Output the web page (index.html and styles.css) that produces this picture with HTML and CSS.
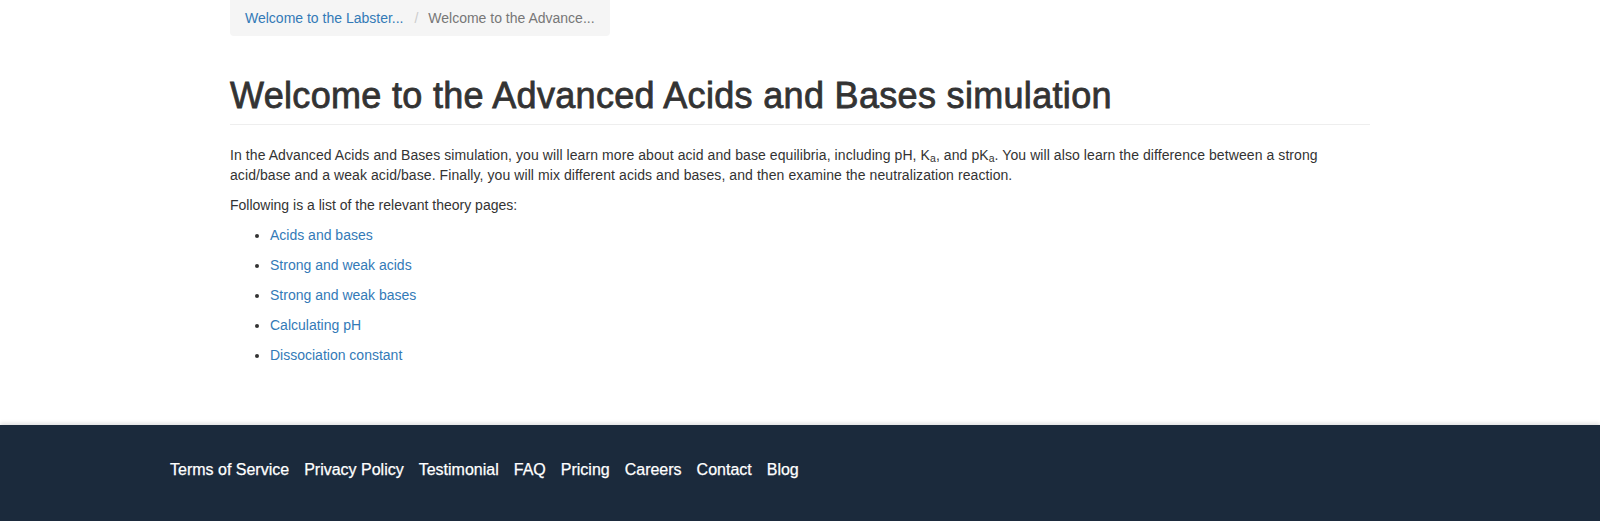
FILE: index.html
```html
<!DOCTYPE html>
<html lang="en">
<head>
<meta charset="utf-8">
<title>Welcome to the Advanced Acids and Bases simulation</title>
<link rel="stylesheet" href="styles.css">
</head>
<body>
<main class="container">
  <ol class="breadcrumb">
    <li><a href="#">Welcome to the Labster...</a></li>
    <li class="active">Welcome to the Advance...</li>
  </ol>
  <div class="page-header">
    <h1>Welcome to the Advanced Acids and Bases simulation</h1>
  </div>
  <p class="intro">In the Advanced Acids and Bases simulation, you will learn more about acid and base equilibria, including pH, K<sub>a</sub>, and pK<sub>a</sub>. You will also learn the difference between a strong acid/base and a weak acid/base. Finally, you will mix different acids and bases, and then examine the neutralization reaction.</p>
  <p>Following is a list of the relevant theory pages:</p>
  <ul class="theory">
    <li><a href="#">Acids and bases</a></li>
    <li><a href="#">Strong and weak acids</a></li>
    <li><a href="#">Strong and weak bases</a></li>
    <li><a href="#">Calculating pH</a></li>
    <li><a href="#">Dissociation constant</a></li>
  </ul>
</main>
<footer class="footer">
  <nav class="footer-inner">
    <a href="#">Terms of Service</a>
    <a href="#">Privacy Policy</a>
    <a href="#">Testimonial</a>
    <a href="#">FAQ</a>
    <a href="#">Pricing</a>
    <a href="#">Careers</a>
    <a href="#">Contact</a>
    <a href="#">Blog</a>
  </nav>
</footer>
</body>
</html>
```
FILE: styles.css
```css
* { box-sizing: border-box; }
html, body { margin: 0; padding: 0; }
body {
  font-family: "Liberation Sans", Arial, Helvetica, sans-serif;
  font-size: 14px;
  line-height: 20px;
  color: #333;
  background: #fff;
}
a { color: #337ab7; text-decoration: none; }

.container {
  width: 1140px;
  margin: 0 auto;
  padding-bottom: 50px;
}

.breadcrumb {
  display: inline-flex;
  list-style: none;
  margin: 0 0 40px;
  padding: 8px 15px;
  background: #f5f5f5;
  border-radius: 0 0 4px 4px;
}
.breadcrumb li + li { margin-left: 6px; }
.breadcrumb li + li::before {
  content: "/\00a0";
  padding: 0 6px 0 5px;
  color: #ccc;
}
.breadcrumb .active { color: #777; }

.page-header {
  padding-bottom: 8px;
  border-bottom: 1px solid #eee;
  margin-bottom: 20px;
}
.page-header h1 {
  margin: 0;
  font-size: 36px;
  line-height: 39.6px;
  font-weight: 400;
  letter-spacing: 0.32px;
  -webkit-text-stroke: 0.8px #333;
  color: #333;
}

p { margin: 0 0 10px; }
.intro { letter-spacing: 0.08px; }
sub {
  font-size: 75%;
  line-height: 0;
  position: relative;
  vertical-align: baseline;
  bottom: -0.25em;
}

.theory {
  margin: 0;
  padding-left: 40px;
}
.theory li { margin-bottom: 10px; }

.footer {
  background: #1b2a3c;
  box-shadow: 0 -2px 4px rgba(0, 0, 0, 0.12);
  height: 96px;
}
.footer-inner {
  width: 1260px;
  margin: 0 auto;
  padding-top: 34px;
  display: flex;
  gap: 15px;
}
.footer-inner a {
  color: #fff;
  font-size: 16px;
  line-height: 22px;
  -webkit-text-stroke: 0.25px #fff;
}
```
